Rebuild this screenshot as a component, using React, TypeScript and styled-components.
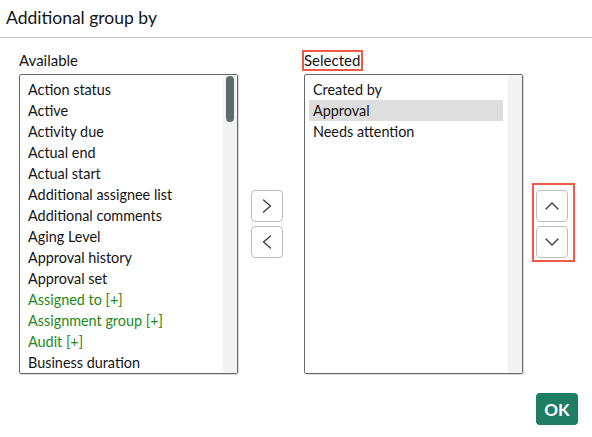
import styled, { createGlobalStyle } from 'styled-components';

const colors = {
  text: '#141414',
  green: '#24891a',
  divider: '#c4c6c6',
  listBorder: '#666a6a',
  track: '#f3f3f3',
  thumb: '#5d6b6b',
  selectedRow: '#dedede',
  buttonBorder: '#b9bfbf',
  flag: '#f05a49',
  ok: '#1f7d64',
};

const GlobalStyle = createGlobalStyle`
  html, body {
    margin: 0;
    padding: 0;
    background: #ffffff;
  }
  body {
    font-family: Lato, 'Noto Sans', sans-serif;
    color: ${colors.text};
  }
`;

const Dialog = styled.div`
  width: 592px;
  height: 437px;
  display: flex;
  flex-direction: column;
  overflow: hidden;
`;

const Header = styled.div`
  height: 38px;
  display: flex;
  align-items: center;
  padding: 0 6px 2px;
  box-sizing: border-box;
  border-bottom: 1px solid ${colors.divider};
`;

const Title = styled.h1`
  margin: 0;
  font-size: 17.5px;
  font-weight: 400;
`;

const Body = styled.div`
  display: flex;
  align-items: flex-end;
  padding: 14px 0 0 19px;
`;

const Column = styled.div`
  display: flex;
  flex-direction: column;
  align-items: flex-start;
`;

const Label = styled.span<{ $flagged?: boolean }>`
  display: inline-block;
  font-size: 15px;
  line-height: 17px;
  margin-bottom: 5px;
  outline: ${(p) => (p.$flagged ? `2px solid ${colors.flag}` : 'none')};
  outline-offset: 0;
  padding: 0 1px 0 0;
`;

const ListBox = styled.div`
  width: 219px;
  height: 300px;
  box-sizing: border-box;
  border: 1px solid ${colors.listBorder};
  border-radius: 2px;
  display: flex;
  box-shadow: 1px 1px 0 rgba(0, 0, 0, 0.15);
`;

const Options = styled.ul`
  flex: 1;
  list-style: none;
  margin: 0;
  padding: 4px;
  overflow: hidden;
`;

const Option = styled.li<{ $green?: boolean; $active?: boolean }>`
  height: 21px;
  line-height: 21px;
  padding: 0 4px;
  font-size: 14.4px;
  white-space: nowrap;
  color: ${(p) => (p.$green ? colors.green : colors.text)};
  background: ${(p) => (p.$active ? colors.selectedRow : 'transparent')};
`;

const ScrollTrack = styled.div`
  width: 15px;
  flex-shrink: 0;
  background: ${colors.track};
  border-left: 1px solid #fafafa;
  box-sizing: border-box;
  padding: 1px 3px 0 3px;
`;

const ScrollThumb = styled.div`
  height: 46px;
  border-radius: 4px;
  background: ${colors.thumb};
`;

const ButtonStack = styled.div<{ $flagged?: boolean; $gapRight?: number }>`
  height: 300px;
  width: 32px;
  display: flex;
  flex-direction: column;
  justify-content: center;
  gap: 4px;
  margin: 0 ${(p) => p.$gapRight ?? 0}px 0 13px;
  position: relative;

  /* red call-out frame drawn over the reorder buttons */
  &::after {
    content: '';
    display: ${(p) => (p.$flagged ? 'block' : 'none')};
    position: absolute;
    left: -4px;
    right: -7px;
    top: 109px;
    height: 75px;
    border: 2px solid ${colors.flag};
    pointer-events: none;
  }
`;

const MoveButton = styled.button`
  width: 32px;
  height: 32px;
  padding: 0;
  display: flex;
  align-items: center;
  justify-content: center;
  background: #ffffff;
  border: 1px solid ${colors.buttonBorder};
  border-radius: 4px;
  cursor: pointer;
  color: #333;
`;

const Footer = styled.div`
  display: flex;
  justify-content: flex-end;
  padding: 19px 14px 0 0;
`;

const OkButton = styled.button`
  width: 42px;
  height: 32px;
  border: none;
  border-radius: 4px;
  background: ${colors.ok};
  color: #ffffff;
  font-family: Lato, 'Noto Sans', sans-serif;
  font-weight: 700;
  font-size: 17px;
  padding: 0;
  cursor: pointer;
`;

type Dir = 'left' | 'right' | 'up' | 'down';

const chevronPoints: Record<Dir, string> = {
  right: '12.5,10 19.5,16 12.5,22',
  left: '19.5,10 12.5,16 19.5,22',
  up: '10,19 16,13 22,19',
  down: '10,13 16,19 22,13',
};

function Chevron({ dir }: { dir: Dir }) {
  return (
    <svg width="30" height="30" viewBox="1 1 30 30">
      <polyline
        points={chevronPoints[dir]}
        fill="none"
        stroke="currentColor"
        strokeWidth="1.2"
        strokeLinecap="round"
        strokeLinejoin="round"
      />
    </svg>
  );
}

const available: { label: string; green?: boolean }[] = [
  { label: 'Action status' },
  { label: 'Active' },
  { label: 'Activity due' },
  { label: 'Actual end' },
  { label: 'Actual start' },
  { label: 'Additional assignee list' },
  { label: 'Additional comments' },
  { label: 'Aging Level' },
  { label: 'Approval history' },
  { label: 'Approval set' },
  { label: 'Assigned to [+]', green: true },
  { label: 'Assignment group [+]', green: true },
  { label: 'Audit [+]', green: true },
  { label: 'Business duration' },
];

const selected = ['Created by', 'Approval', 'Needs attention'];

export default function App() {
  return (
    <>
      <GlobalStyle />
      <Dialog>
        <Header>
          <Title>Additional group by</Title>
        </Header>
        <Body>
          <Column>
            <Label>Available</Label>
            <ListBox>
              <Options>
                {available.map((item) => (
                  <Option key={item.label} $green={item.green}>
                    {item.label}
                  </Option>
                ))}
              </Options>
              <ScrollTrack>
                <ScrollThumb />
              </ScrollTrack>
            </ListBox>
          </Column>

          <ButtonStack $gapRight={21}>
            <MoveButton aria-label="Add">
              <Chevron dir="right" />
            </MoveButton>
            <MoveButton aria-label="Remove">
              <Chevron dir="left" />
            </MoveButton>
          </ButtonStack>

          <Column>
            <Label $flagged>Selected</Label>
            <ListBox>
              <Options>
                {selected.map((label) => (
                  <Option key={label} $active={label === 'Approval'}>
                    {label}
                  </Option>
                ))}
              </Options>
              <ScrollTrack />
            </ListBox>
          </Column>

          <ButtonStack $flagged>
            <MoveButton aria-label="Move up">
              <Chevron dir="up" />
            </MoveButton>
            <MoveButton aria-label="Move down">
              <Chevron dir="down" />
            </MoveButton>
          </ButtonStack>
        </Body>
        <Footer>
          <OkButton>OK</OkButton>
        </Footer>
      </Dialog>
    </>
  );
}
